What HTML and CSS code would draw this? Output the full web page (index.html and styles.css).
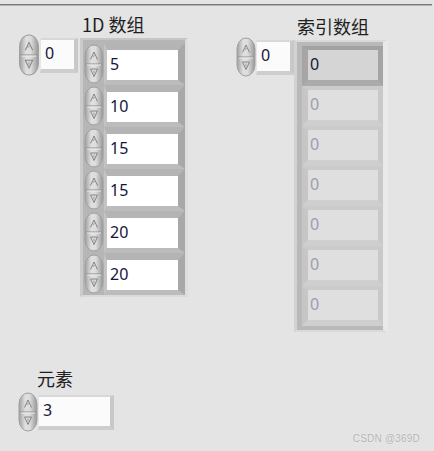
FILE: index.html
```html
<!DOCTYPE html>
<html lang="zh">
<head>
<meta charset="utf-8">
<link rel="stylesheet" href="styles.css">
</head>
<body>
<svg class="defs" width="0" height="0" aria-hidden="true">
  <defs>
    <linearGradient id="sg" x1="0" y1="0" x2="1" y2="0">
      <stop offset="0" stop-color="#a0a0a0"/>
      <stop offset="0.35" stop-color="#e0e0e0"/>
      <stop offset="0.6" stop-color="#dcdcdc"/>
      <stop offset="1" stop-color="#969696"/>
    </linearGradient>
    <symbol id="spin" viewBox="0 0 20 40">
      <rect x="1" y="1" width="18" height="38" rx="9" ry="11" fill="url(#sg)" stroke="#a0a0a0" stroke-width="1"/>
      <line x1="2" y1="20" x2="18" y2="20" stroke="#8e8e8e" stroke-width="1"/>
      <line x1="3" y1="21" x2="17" y2="21" stroke="#eeeeee" stroke-width="1"/>
      <path d="M6.5 15.5 L10 8 L13.5 15.5" fill="none" stroke="#848484" stroke-width="1"/>
      <path d="M9 13 L10.5 11" fill="none" stroke="#949494" stroke-width="0.9"/>
      <path d="M6.5 25 H13.5 L10 32.5 Z" fill="none" stroke="#848484" stroke-width="1"/>
      <path d="M10 26.5 V29.5" fill="none" stroke="#949494" stroke-width="0.9"/>
    </symbol>
  </defs>
</svg>
<div class="panel">
  <div class="ctl c1">
    <div class="idx">
      <svg class="spin big"><use href="#spin"/></svg>
      <div class="ibox">0</div>
    </div>
    <div class="col col1">
      <div class="lbl">1D 数组</div>
      <div class="frame f1">
        <div class="row1"><svg class="spin"><use href="#spin"/></svg><div class="cell1">5</div></div>
        <div class="row1"><svg class="spin"><use href="#spin"/></svg><div class="cell1">10</div></div>
        <div class="row1"><svg class="spin"><use href="#spin"/></svg><div class="cell1">15</div></div>
        <div class="row1"><svg class="spin"><use href="#spin"/></svg><div class="cell1">15</div></div>
        <div class="row1"><svg class="spin"><use href="#spin"/></svg><div class="cell1">20</div></div>
        <div class="row1"><svg class="spin"><use href="#spin"/></svg><div class="cell1">20</div></div>
      </div>
    </div>
  </div>

  <div class="ctl c2">
    <div class="idx">
      <svg class="spin"><use href="#spin"/></svg>
      <div class="ibox">0</div>
    </div>
    <div class="col">
      <div class="lbl lbl2">索引数组</div>
      <div class="frame f2">
        <div class="cell2 active">0</div>
        <div class="cell2">0</div>
        <div class="cell2">0</div>
        <div class="cell2">0</div>
        <div class="cell2">0</div>
        <div class="cell2">0</div>
        <div class="cell2">0</div>
      </div>
    </div>
  </div>

  <div class="ctl c3">
    <div class="lbl lbl3">元素</div>
    <div class="idx">
      <svg class="spin"><use href="#spin"/></svg>
      <div class="ibox wide">3</div>
    </div>
  </div>

  <div class="mark">CSDN @369D</div>
</div>
</body>
</html>
```

FILE: styles.css
```css
* { box-sizing: border-box; }

html, body {
  margin: 0;
  padding: 0;
  background: #e4e4e4;
}

body {
  font-family: "Noto Sans", "Noto Sans CJK SC", sans-serif;
}

.defs {
  position: absolute;
  width: 0;
  height: 0;
}

.panel {
  position: relative;
  width: 434px;
  height: 451px;
  overflow: hidden;
  background: #e4e4e4;
}

.panel::before {
  content: "";
  position: absolute;
  left: 0;
  right: 2px;
  top: 4px;
  height: 1px;
  background: #7a7a7a;
  box-shadow: 0 1px 0 #b2b2b2;
}

.ctl {
  position: absolute;
  display: flex;
  align-items: flex-start;
}

.c1 { left: 18px; top: 12px; }
.c2 { left: 236px; top: 14px; }
.c3 { left: 18px; top: 364px; flex-direction: column; }

.idx {
  display: flex;
  align-items: center;
  margin-top: 22px;
}

.c2 .idx { margin-top: 23px; }
.c3 .idx { margin-top: 0; }

.spin {
  width: 20px;
  height: 40px;
  display: block;
  flex: none;
}

.spin.big {
  width: 22px;
  height: 42px;
}

.ibox {
  width: 38px;
  height: 35px;
  background: #fbfbfb;
  border-top: 2px solid #d8d8d8;
  border-left: 1px solid #e6e6e6;
  border-right: 4px solid #c8c8c8;
  border-bottom: 4px solid #cecece;
  font-size: 16px;
  line-height: 27px;
  padding-left: 4px;
  color: #15153a;
}

.ibox.wide { width: 76px; }

.col {
  display: flex;
  flex-direction: column;
}

.col1 { margin-left: 2px; }

.lbl {
  height: 26px;
  font-family: "Noto Sans CJK SC", "Noto Sans", sans-serif;
  font-size: 18px;
  line-height: 24px;
  padding-left: 2px;
  color: #1e1e1e;
  white-space: nowrap;
}

.lbl2 { padding-left: 3px; }

.lbl3 {
  height: 28px;
  padding-left: 19px;
  line-height: 28px;
}

.frame { display: flex; flex-direction: column; }

.f1 {
  width: 108px;
  border: 3px solid #d4d4d4;
  border-top: 2px solid #c6c6c6;
  border-left-color: #cbcbcb;
  border-right-color: #dedede;
  border-bottom: 2px solid #dadada;
  background: #b6b6b6;
  padding: 3px 0 0 1px;
}

.row1 {
  display: flex;
  align-items: center;
  height: 42px;
}

.cell1 {
  width: 81px;
  height: 42px;
  background: #ffffff;
  border-top: 7px solid #b4b4b4;
  border-right: 7px solid #a8a8a8;
  border-bottom: 5px solid #bcbcbc;
  border-left: 3px solid #c4c4c4;
  font-size: 16px;
  line-height: 29px;
  padding-left: 3px;
  color: #15153a;
}

.f2 {
  width: 94px;
  border: 2px solid #dadada;
  border-left: 3px solid #d2d2d2;
  border-right: 5px solid #e9e9e9;
  background: #b9b9b9;
  padding: 4px 0 4px 5px;
}

.cell2 {
  width: 81px;
  height: 40px;
  background: #dfdfdf;
  border-top: 4px solid #cbcbcb;
  border-left: 6px solid #c6c6c6;
  border-right: 5px solid #c9c9c9;
  border-bottom: 6px solid #cfcfcf;
  font-size: 16px;
  line-height: 29px;
  padding-left: 2px;
  color: #9c9cae;
}

.cell2.active {
  background: #d5d5d5;
  border-top-color: #a2a2a2;
  border-left-color: #a6a6a6;
  border-right-color: #a4a4a4;
  border-bottom-color: #ababab;
  color: #15153a;
}

.mark {
  position: absolute;
  right: 14px;
  bottom: 7px;
  font-family: "Liberation Sans", sans-serif;
  font-size: 10px;
  color: #b2b2b2;
  text-shadow: 0 0 1px #ffffff;
  letter-spacing: 0.2px;
}
```
